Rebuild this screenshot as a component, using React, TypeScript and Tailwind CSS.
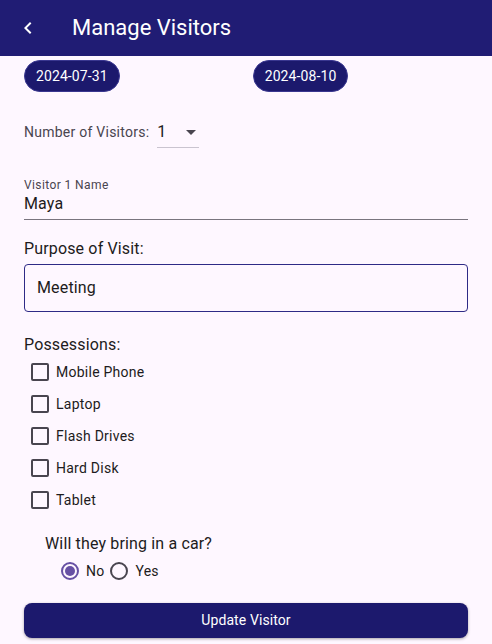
import { useState } from "react";

const POSSESSIONS = ["Mobile Phone", "Laptop", "Flash Drives", "Hard Disk", "Tablet"];

export default function App() {
  const [checked, setChecked] = useState<Record<string, boolean>>({});
  const [car, setCar] = useState<"no" | "yes">("no");

  return (
    <div
      className="w-[492px] h-[644px] overflow-hidden bg-[#fef7ff] text-[#1d1b20]"
      style={{ fontFamily: "Roboto, 'Liberation Sans', sans-serif" }}
    >
      {/* App bar */}
      <header className="h-[56px] bg-[#201c74] flex items-center">
        <button className="w-[56px] h-[56px] flex items-center justify-center text-white">
          <svg width="24" height="24" viewBox="0 0 24 24" fill="currentColor">
            <path d="M15.41 7.41 14 6l-6 6 6 6 1.41-1.41L10.83 12z" />
          </svg>
        </button>
        <h1 className="ml-[16px] text-[22px] text-white leading-none">Manage Visitors</h1>
      </header>

      <div className="px-[24px]">
        {/* Date chips */}
        <div className="flex items-center pt-[4px]">
          <span className="h-[32px] px-[11px] rounded-full bg-[#1c196d] text-white text-[14px] tracking-[0.1px] flex items-center border border-[#3a3790]">
            2024-07-31
          </span>
          <span className="ml-[133px] h-[32px] px-[11px] rounded-full bg-[#1c196d] text-white text-[14px] tracking-[0.1px] flex items-center border border-[#3a3790]">
            2024-08-10
          </span>
        </div>

        {/* Number of visitors */}
        <div className="flex items-center mt-[24px] h-[32px]">
          <span className="text-[14px] tracking-[0.25px] text-[#49454f]">Number of Visitors:</span>
          <div className="ml-[8px] w-[42px] h-[32px] flex items-center justify-between border-b border-[#cac4d0]">
            <span className="text-[16px] text-[#1d1b20]">1</span>
            <svg width="24" height="24" viewBox="0 0 24 24" fill="#49454f" className="-mr-[4px]">
              <path d="M7 10l5 5 5-5z" />
            </svg>
          </div>
        </div>

        {/* Visitor name */}
        <div className="mt-[29px] border-b border-[#79747e] pb-[4px]">
          <div className="text-[12px] tracking-[0.4px] text-[#49454f] leading-[16px]">Visitor 1 Name</div>
          <div className="text-[16px] tracking-[0.15px] leading-[22px]">Maya</div>
        </div>

        {/* Purpose */}
        <div className="mt-[18px] text-[16px] tracking-[0.15px] leading-[22px] text-[#1d1b20]">Purpose of Visit:</div>
        <div className="mt-[4px] h-[48px] rounded-[4px] border border-[#2e2a86] flex items-center px-[12px] text-[16px] tracking-[0.15px]">
          Meeting
        </div>

        {/* Possessions */}
        <div className="mt-[22px] text-[16px] tracking-[0.15px] leading-[22px]">Possessions:</div>
        <div className="flex flex-col">
          {POSSESSIONS.map((p) => (
            <label key={p} className="h-[32px] flex items-center cursor-pointer">
              <span
                onClick={() => setChecked((c) => ({ ...c, [p]: !c[p] }))}
                className={`ml-[7px] w-[18px] h-[18px] rounded-[2px] border-2 flex items-center justify-center ${
                  checked[p] ? "bg-[#1c196d] border-[#1c196d]" : "border-[#49454f]"
                }`}
              >
                {checked[p] && (
                  <svg width="14" height="14" viewBox="0 0 24 24" fill="none" stroke="white" strokeWidth="3">
                    <path d="M4 12l5 5L20 6" />
                  </svg>
                )}
              </span>
              <span className="ml-[7px] text-[14px] tracking-[0.25px] text-[#1d1b20]">{p}</span>
            </label>
          ))}
        </div>

        {/* Car */}
        <div className="mt-[17px] ml-[21px] text-[16px] tracking-[0.15px] leading-[22px]">Will they bring in a car?</div>
        <div className="mt-[4px] ml-[37px] flex items-center h-[24px]">
          <button onClick={() => setCar("no")} className="flex items-center">
            <span
              className={`w-[18px] h-[18px] rounded-full border-2 flex items-center justify-center ${
                car === "no" ? "border-[#6750a4]" : "border-[#49454f]"
              }`}
            >
              {car === "no" && <span className="w-[10px] h-[10px] rounded-full bg-[#6750a4]" />}
            </span>
            <span className="ml-[7px] text-[14px] tracking-[0.25px]">No</span>
          </button>
          <button onClick={() => setCar("yes")} className="flex items-center ml-[6px]">
            <span
              className={`w-[18px] h-[18px] rounded-full border-2 flex items-center justify-center ${
                car === "yes" ? "border-[#6750a4]" : "border-[#49454f]"
              }`}
            >
              {car === "yes" && <span className="w-[10px] h-[10px] rounded-full bg-[#6750a4]" />}
            </span>
            <span className="ml-[7px] text-[14px] tracking-[0.25px]">Yes</span>
          </button>
        </div>

        {/* Submit */}
        <button className="mt-[20px] w-full h-[35px] rounded-[8px] bg-[#1c196d] text-white text-[14px] tracking-[0.1px] shadow-[0_1px_3px_rgba(0,0,0,0.35)]">
          Update Visitor
        </button>
      </div>
    </div>
  );
}
